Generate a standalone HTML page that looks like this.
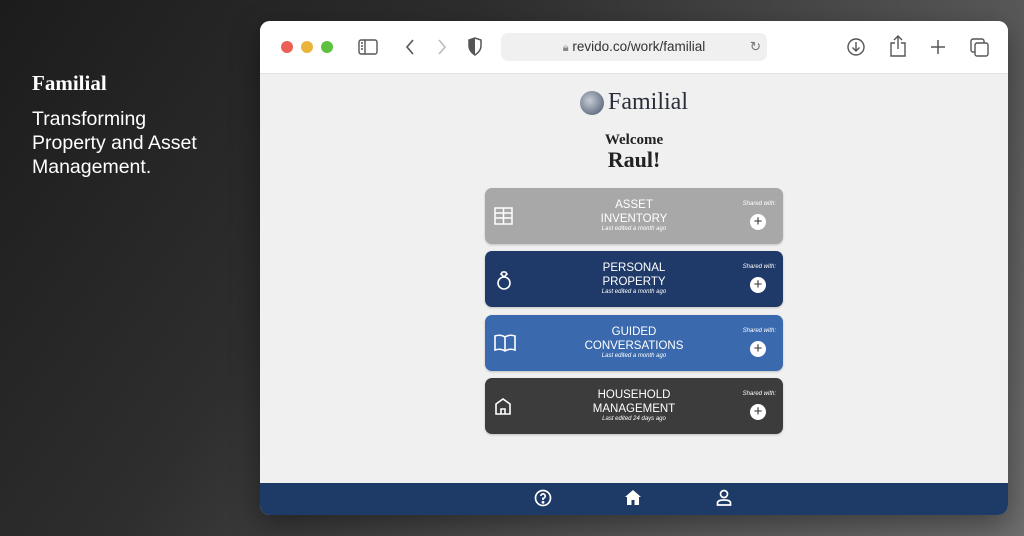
<!DOCTYPE html>
<html><head><meta charset="utf-8"><style>
*{margin:0;padding:0;box-sizing:border-box}
body{width:1024px;height:536px;overflow:hidden;background:linear-gradient(125deg,#1c1c1c 0%,#2e2e2e 35%,#5a5a5a 75%,#6e6e6e 100%);font-family:"Liberation Sans",sans-serif;position:relative}
.brand{position:absolute;left:32px;top:71px;color:#fff;font-family:"Liberation Serif",serif;font-weight:bold;font-size:21px}
.tag{position:absolute;left:32px;top:107px;color:#fff;font-size:19.5px;line-height:24px}
.win{position:absolute;left:260px;top:21px;width:748px;height:494px;border-radius:10px;overflow:hidden;background:#f0f0f0;box-shadow:0 10px 30px rgba(0,0,0,.4)}
.bar{height:53px;background:#fff;border-bottom:1px solid #e2e2e2;position:relative}
.dot{position:absolute;top:20px;width:12px;height:12px;border-radius:50%}
.url{position:absolute;left:241px;top:12px;width:266px;height:28px;background:#f0f0f0;border-radius:7px;font-size:13.5px;color:#333;text-align:center;line-height:28px}
.ic{position:absolute}
.logo{position:absolute;left:320px;top:68px;font-family:"Liberation Serif",serif;font-size:24px;color:#2a2e3a}
.orb{position:absolute;left:320px;top:70px;width:24px;height:24px;border-radius:50%;background:radial-gradient(circle at 40% 40%,#c6ccd6,#6a7688 70%,#4a5566)}
.wel{position:absolute;left:0;width:748px;text-align:center;font-family:"Liberation Serif",serif;font-weight:bold;color:#222}
.card{position:absolute;left:225px;width:298px;height:56px;border-radius:7px;color:#fff;text-align:center;box-shadow:0 1px 2px rgba(0,0,0,.2)}
.card .t{position:absolute;left:0;right:0;top:11px;font-size:11.5px;line-height:13.5px}
.card .s{position:absolute;left:0;right:0;top:38px;font-size:6px;font-style:italic}
.card .sh{position:absolute;right:7px;top:13px;font-size:6px;font-style:italic}
.card .pl{position:absolute;right:17px;top:26px;width:16px;height:16px;border-radius:50%;background:#fff;color:#333;font-size:15px;line-height:15px;text-align:center}
.card svg{position:absolute;left:9px;top:19px}
.foot{position:absolute;left:0;bottom:0;width:748px;height:32px;background:#1e3a66}
</style></head><body>
<div class="brand">Familial</div>
<div class="tag">Transforming<br>Property and Asset<br>Management.</div>
<div class="win">
 <div class="bar">
  <div class="dot" style="left:21px;background:#ec5f57"></div>
  <div class="dot" style="left:41px;background:#e8b43a"></div>
  <div class="dot" style="left:61px;background:#5cc13f"></div>
  <svg class="ic" style="left:98px;top:18px" width="20" height="16" viewBox="0 0 20 16" fill="none" stroke="#555" stroke-width="1.4"><rect x="1" y="1" width="18" height="14" rx="2"/><path d="M7 1v14M3 4h2M3 7h2M3 10h2"/></svg>
  <svg class="ic" style="left:144px;top:17px" width="12" height="18" viewBox="0 0 12 18" fill="none" stroke="#555" stroke-width="1.6"><path d="M9 2L3 9l6 7"/></svg>
  <svg class="ic" style="left:176px;top:17px" width="12" height="18" viewBox="0 0 12 18" fill="none" stroke="#bbb" stroke-width="1.6"><path d="M3 2l6 7-6 7"/></svg>
  <svg class="ic" style="left:207px;top:16px" width="16" height="19" viewBox="0 0 16 19"><path d="M8 1L2 3v6c0 4 3 7 6 9 3-2 6-5 6-9V3z" fill="none" stroke="#555" stroke-width="1.5"/><path d="M8 1L2 3v6c0 4 3 7 6 9z" fill="#555"/></svg>
  <div class="url"><span style="color:#888;font-size:11px">🔒︎</span> revido.co/work/familial<span style="position:absolute;right:6px;color:#777">↻</span></div>
  <svg class="ic" style="left:587px;top:17px" width="18" height="18" viewBox="0 0 18 18" fill="none" stroke="#555" stroke-width="1.4"><circle cx="9" cy="9" r="8"/><path d="M9 4v9M5.5 9.5L9 13l3.5-3.5"/></svg>
  <svg class="ic" style="left:629px;top:14px" width="18" height="22" viewBox="0 0 18 22" fill="none" stroke="#555" stroke-width="1.4"><path d="M6 8H2v13h14V8h-4M9 14V1M5 5l4-4 4 4"/></svg>
  <svg class="ic" style="left:670px;top:18px" width="16" height="16" viewBox="0 0 16 16" stroke="#555" stroke-width="1.5"><path d="M8 1v14M1 8h14"/></svg>
  <svg class="ic" style="left:710px;top:17px" width="19" height="19" viewBox="0 0 19 19" fill="none" stroke="#555" stroke-width="1.4"><rect x="5" y="5" width="13" height="13" rx="2"/><path d="M14 5V3a2 2 0 0 0-2-2H3a2 2 0 0 0-2 2v9a2 2 0 0 0 2 2h2"/></svg>
 </div>
 <div class="orb"></div>
 <div class="logo" style="left:348px">Familial</div>
 <div class="wel" style="top:111px;font-size:15px">Welcome</div>
 <div class="wel" style="top:126px;font-size:22px">Raul!</div>

 <div class="card" style="top:167px;background:#a8a8a8"><svg width="20" height="18" viewBox="0 0 20 18" fill="none" stroke="#fff" stroke-width="1.5"><rect x="1" y="1" width="17" height="16"/><path d="M1 6h17M1 11h17M9.5 1v16"/></svg><div class="t">ASSET<br>INVENTORY</div><div class="s">Last edited a month ago</div><div class="sh">Shared with:</div><div class="pl">+</div></div>
 <div class="card" style="top:230px;background:#1f3a68"><svg width="20" height="20" viewBox="0 0 20 20" fill="none" stroke="#fff" stroke-width="1.6"><circle cx="10" cy="13" r="6"/><path d="M7 4l1.5-2h3L13 4l-3 3z"/></svg><div class="t">PERSONAL<br>PROPERTY</div><div class="s">Last edited a month ago</div><div class="sh">Shared with:</div><div class="pl">+</div></div>
 <div class="card" style="top:294px;background:#3a6aad"><svg width="22" height="18" viewBox="0 0 22 18" fill="none" stroke="#fff" stroke-width="1.6"><path d="M11 3v14M11 3C8 1 4 1 1 2v14c3-1 7-1 10 1 3-2 7-2 10-1V2c-3-1-7-1-10 1"/></svg><div class="t">GUIDED<br>CONVERSATIONS</div><div class="s">Last edited a month ago</div><div class="sh">Shared with:</div><div class="pl">+</div></div>
 <div class="card" style="top:357px;background:#3c3c3c"><svg width="18" height="18" viewBox="0 0 18 18" fill="none" stroke="#fff" stroke-width="1.6"><path d="M2 7l7-5 7 5v10H2zM7 17v-5h4v5"/></svg><div class="t">HOUSEHOLD<br>MANAGEMENT</div><div class="s">Last edited 24 days ago</div><div class="sh">Shared with:</div><div class="pl">+</div></div>

 <div class="foot">
  <svg class="ic" style="left:274px;top:6px" width="18" height="18" viewBox="0 0 18 18" fill="none" stroke="#fff" stroke-width="1.7"><circle cx="9" cy="9" r="7.5"/><path d="M6.8 7a2.2 2.2 0 1 1 2.2 2.3V11"/><circle cx="9" cy="13.3" r=".6" fill="#fff"/></svg>
  <svg class="ic" style="left:364px;top:6px" width="18" height="17" viewBox="0 0 18 17"><path d="M9 1L1 8h2v8h4.5v-5h3v5H15V8h2z" fill="#fff"/></svg>
  <svg class="ic" style="left:456px;top:6px" width="16" height="17" viewBox="0 0 16 17" fill="none" stroke="#fff" stroke-width="1.7"><circle cx="8" cy="5" r="3.5"/><path d="M1.5 16v-2c0-2 2-3 6.5-3s6.5 1 6.5 3v2z"/></svg>
 </div>
</div>
</body></html>
